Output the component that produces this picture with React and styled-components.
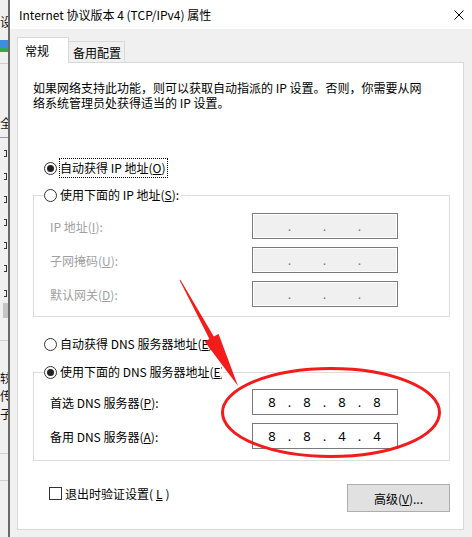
import React from 'react';
import styled, { createGlobalStyle } from 'styled-components';

const GlobalStyle = createGlobalStyle`
  html, body { margin: 0; padding: 0; background: #f0f0f0; }
  body {
    font-family: "Noto Sans CJK SC", "Noto Sans", sans-serif;
    font-size: 12px;
    color: #000;
  }
  * { box-sizing: border-box; }
`;

const Screen = styled.div`
  position: relative;
  width: 472px;
  height: 537px;
  overflow: hidden;
  display: flex;
`;

/* ---------- window behind the dialog ---------- */
const BackWindow = styled.div`
  width: 8px;
  flex: none;
  background: #f0f0f0;
  overflow: hidden;
  display: flex;
  flex-direction: column;
`;
const StripChar = styled.div`
  margin-top: ${p => p.$mt}px;
  height: 12px;
  font-size: 12px;
  line-height: 12px;
  white-space: nowrap;
  color: #111;
`;
const StripIcon = styled.div`
  margin-top: ${p => p.$mt}px;
  width: 8px;
  height: 12px;
  background: linear-gradient(#3d8ee0 0 70%, #37a84a 70% 100%);
`;
const StripLine = styled.div`
  margin-top: ${p => p.$mt}px;
  height: 1px;
  background: ${p => p.$c || '#cfcfcf'};
`;
const StripBracket = styled.div`
  margin-top: ${p => p.$mt}px;
  margin-left: 4px;
  width: 3px;
  height: 7px;
  border: 1px solid #333;
  border-left: none;
`;
const StripBlock = styled.div`
  margin-top: ${p => p.$mt}px;
  margin-left: 3px;
  height: 15px;
  background: #c4c4c4;
`;
const Edge = styled.div`
  width: 2px;
  flex: none;
  background: #6a6a6a;
`;

/* ---------- dialog ---------- */
const Dialog = styled.div`
  flex: 1;
  display: flex;
  flex-direction: column;
  background: #f0f0f0;
`;
const TitleBar = styled.div`
  height: 29px;
  flex: none;
  background: #fff;
  display: flex;
  align-items: center;
  justify-content: space-between;
  padding: 0 8px 0 9px;
`;
const Title = styled.span`
  font-size: 12px;
  line-height: 15px;
`;
const CloseIcon = styled.svg`
  width: 10px;
  height: 10px;
  display: block;
`;
const Body = styled.div`
  padding: 8px 8px 0 7px;
  display: flex;
  flex-direction: column;
`;
const TabBar = styled.div`
  display: flex;
  align-items: flex-end;
  height: 26px;
`;
const Tab = styled.div`
  position: relative;
  border: 1px solid #d9d9d9;
  border-bottom: none;
  font-size: 12px;
  line-height: 15px;
  ${p => p.$active ? `
    z-index: 1;
    width: 52px;
    height: 26px;
    background: #fff;
    padding: 5px 0 0 7px;
  ` : `
    width: 57px;
    height: 21px;
    margin-left: -1px;
    margin-bottom: 1px;
    background: #f0f0f0;
    padding: 3px 0 0 4px;
  `}
`;
const Panel = styled.div`
  margin-top: -1px;
  height: 468px;
  border: 1px solid #d9d9d9;
  background: #fff;
  padding: 17px 13px 0 15px;
  display: flex;
  flex-direction: column;
`;
const Intro = styled.p`
  margin: 0;
  font-size: 12px;
  line-height: 15px;
`;

const RadioRow = styled.div`
  display: flex;
  align-items: center;
  height: 20px;
  padding-left: ${p => p.$indent ?? 11}px;
  margin-top: ${p => p.$mt || 0}px;
`;
const RadioCircle = styled.span`
  width: 13px;
  height: 13px;
  flex: none;
  border-radius: 50%;
  border: 1px solid #333;
  background: #fff;
  display: flex;
  align-items: center;
  justify-content: center;
  &::after {
    content: '';
    width: 7px;
    height: 7px;
    border-radius: 50%;
    background: ${p => p.$checked ? '#222' : 'transparent'};
  }
`;
const RadioText = styled.span`
  margin-left: 2px;
  height: 20px;
  line-height: 18px;
  border: 1px dotted ${p => p.$focus ? '#000' : 'transparent'};
  padding: 0 1px 0 0;
  white-space: nowrap;
  overflow: hidden;
  max-width: ${p => p.$clip ? `${p.$clip}px` : 'none'};
  background: #fff;
`;

const GroupBox = styled.fieldset`
  margin: ${p => p.$mt}px 0 0 0;
  padding: ${p => p.$pt}px 51px ${p => p.$pb}px 16px;
  border: 1px solid #dcdcdc;
  min-width: 0;
`;
const Legend = styled.legend`
  padding: 0;
  margin-left: -6px;
  display: flex;
  align-items: center;
  height: 20px;
`;
const FieldGrid = styled.div`
  display: grid;
  grid-template-columns: 1fr 146px;
  row-gap: 8px;
  align-items: center;
`;
const FieldLabel = styled.span`
  font-size: 12px;
  line-height: 15px;
  color: ${p => p.$disabled ? '#a0a0a0' : '#000'};
`;
const IpBox = styled.div`
  width: 146px;
  height: 26px;
  display: flex;
  align-items: center;
  padding: 0 6px;
  border: 1px solid #7a7a7a;
  background: ${p => p.$disabled ? '#f0f0f0' : '#fff'};
  box-shadow: ${p => p.$disabled ? 'inset 0 0 0 1px #fff' : 'none'};
  font-family: "Noto Sans", "Noto Sans CJK SC", sans-serif;
  font-size: 13px;
  color: ${p => p.$disabled ? '#7a7a7a' : '#000'};
`;
const Octet = styled.span`
  width: 26px;
  text-align: center;
  line-height: 24px;
`;
const IpDot = styled.span`
  width: 9px;
  text-align: center;
  line-height: 24px;
`;

const BottomRow = styled.div`
  margin-top: 23px;
  display: flex;
  justify-content: space-between;
  align-items: flex-start;
  padding-left: 16px;
`;
const CheckLabel = styled.label`
  display: flex;
  align-items: center;
  margin-top: 3px;
  gap: 3px;
  line-height: 13px;
`;
const CheckBox = styled.span`
  width: 13px;
  height: 13px;
  border: 1px solid #333;
  background: #fff;
  flex: none;
`;
const Button = styled.button`
  width: 103px;
  height: 28px;
  border: 1px solid #adadad;
  background: #e1e1e1;
  font-family: inherit;
  font-size: 12px;
  color: #000;
  padding: 0;
`;

const Annotation = styled.svg`
  position: absolute;
  left: 0;
  top: 0;
  width: 472px;
  height: 537px;
  pointer-events: none;
`;

const IpInput = ({ values, disabled }) => (
  <IpBox $disabled={disabled}>
    {[0, 1, 2, 3].map(i => (
      <React.Fragment key={i}>
        <Octet>{values ? values[i] : ''}</Octet>
        {i < 3 && <IpDot>.</IpDot>}
      </React.Fragment>
    ))}
  </IpBox>
);

export default function App() {
  return (
    <>
      <GlobalStyle />
      <Screen>
        <BackWindow>
          <StripChar $mt={16}>设</StripChar>
          <StripIcon $mt={12} />
          <StripLine $mt={11} />
          <StripChar $mt={53}>全</StripChar>
          <StripLine $mt={8} $c="#9a9a9a" />
          <StripBracket $mt={12} />
          <StripBracket $mt={16} />
          <StripBracket $mt={16} />
          <StripBracket $mt={16} />
          <StripBracket $mt={16} />
          <StripBracket $mt={16} />
          <StripBracket $mt={18} />
          <StripBlock $mt={6} />
          <StripLine $mt={22} />
          <StripChar $mt={31}>较</StripChar>
          <StripChar $mt={6}>传</StripChar>
          <StripChar $mt={6}>子</StripChar>
          <StripLine $mt={33} />
          <StripLine $mt={26} />
        </BackWindow>
        <Edge />
        <Dialog>
          <TitleBar>
            <Title>Internet 协议版本 4 (TCP/IPv4) 属性</Title>
            <CloseIcon viewBox="0 0 10 10">
              <path d="M0.5 0.5 L9.5 9.5 M9.5 0.5 L0.5 9.5" stroke="#000" strokeWidth="1" fill="none" />
            </CloseIcon>
          </TitleBar>
          <Body>
            <TabBar>
              <Tab $active>常规</Tab>
              <Tab>备用配置</Tab>
            </TabBar>
            <Panel>
              <Intro>
                如果网络支持此功能，则可以获取自动指派的 IP 设置。否则，你需要从网<br />
                络系统管理员处获得适当的 IP 设置。
              </Intro>

              <RadioRow $mt={48}>
                <RadioCircle $checked />
                <RadioText $focus>自动获得 IP 地址(<u>O</u>)</RadioText>
              </RadioRow>

              <GroupBox $mt={7} $pt={8} $pb={9}>
                <Legend>
                  <RadioCircle />
                  <RadioText>使用下面的 IP 地址(<u>S</u>):</RadioText>
                </Legend>
                <FieldGrid>
                  <FieldLabel $disabled>IP 地址(<u>I</u>):</FieldLabel>
                  <IpInput disabled />
                  <FieldLabel $disabled>子网掩码(<u>U</u>):</FieldLabel>
                  <IpInput disabled />
                  <FieldLabel $disabled>默认网关(<u>D</u>):</FieldLabel>
                  <IpInput disabled />
                </FieldGrid>
              </GroupBox>

              <RadioRow $mt={17}>
                <RadioCircle />
                <RadioText $clip={156}>自动获得 DNS 服务器地址(<u>E</u>)</RadioText>
              </RadioRow>

              <GroupBox $mt={8} $pt={7} $pb={11}>
                <Legend>
                  <RadioCircle $checked />
                  <RadioText $clip={164}>使用下面的 DNS 服务器地址(<u>E</u>):</RadioText>
                </Legend>
                <FieldGrid>
                  <FieldLabel>首选 DNS 服务器(<u>P</u>):</FieldLabel>
                  <IpInput values={['8', '8', '8', '8']} />
                  <FieldLabel>备用 DNS 服务器(<u>A</u>):</FieldLabel>
                  <IpInput values={['8', '8', '4', '4']} />
                </FieldGrid>
              </GroupBox>

              <BottomRow>
                <CheckLabel>
                  <CheckBox />
                  退出时验证设置(<u>L</u>)
                </CheckLabel>
                <Button>高级(<u>V</u>)...</Button>
              </BottomRow>
            </Panel>
          </Body>
        </Dialog>

        <Annotation viewBox="0 0 472 537">
          <ellipse cx="331" cy="412.5" rx="108.5" ry="44" fill="none" stroke="#f41b1b" strokeWidth="3" />
          <polygon
            points="180.4,279.8 213.8,336.6 218.6,334.0 238,386 204.6,341.6 209.4,339.0 179.6,280.2"
            fill="#f41b1b"
          />
        </Annotation>
      </Screen>
    </>
  );
}
